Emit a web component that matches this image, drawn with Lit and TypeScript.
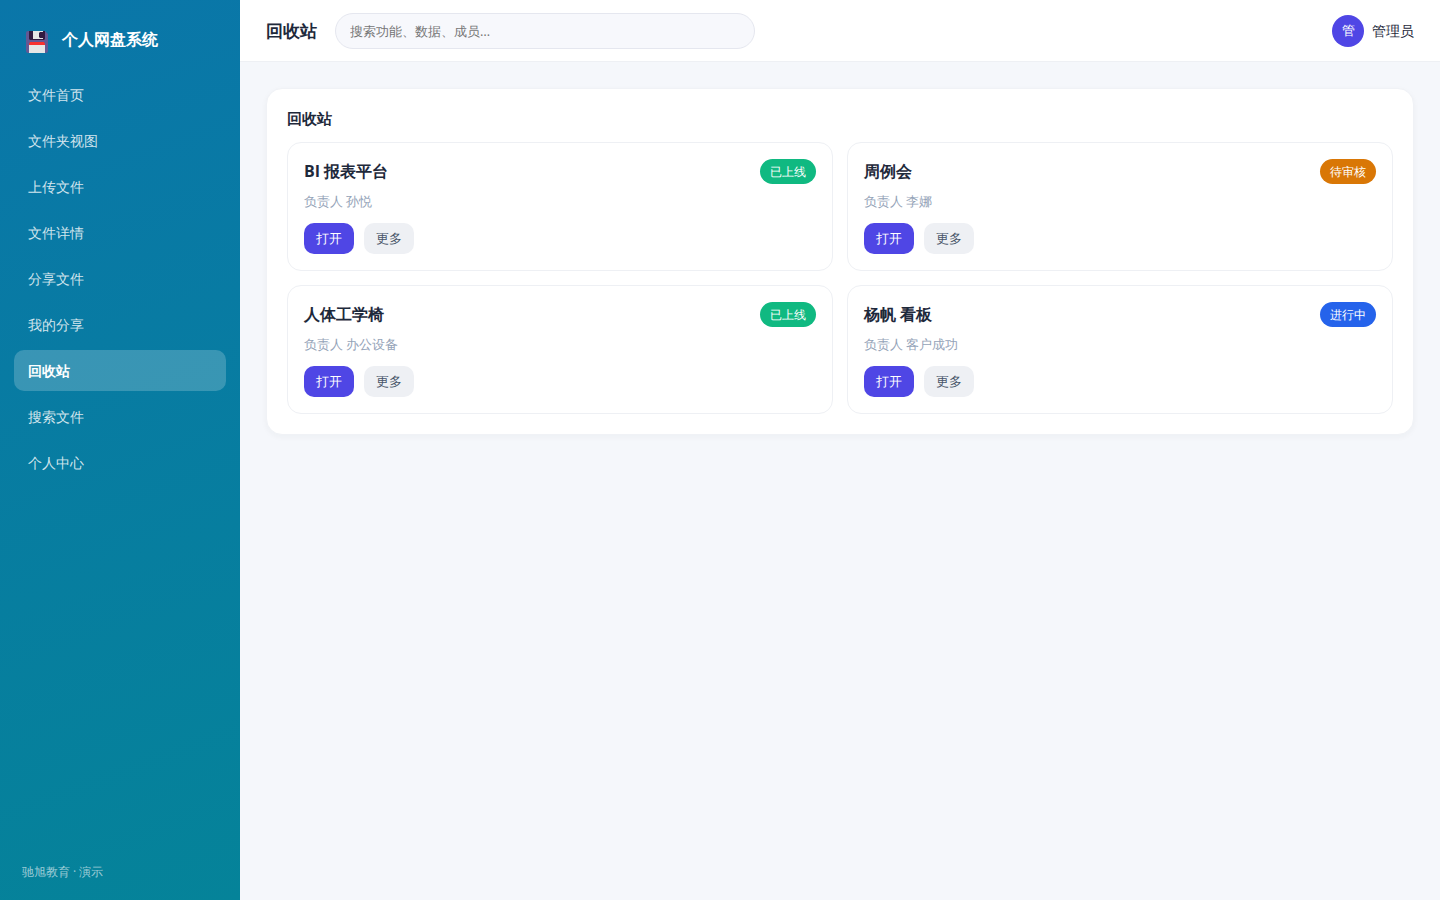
import { LitElement, html, css } from "lit";
import { customElement, state } from "lit/decorators.js";
import { classMap } from "lit/directives/class-map.js";

type Tone = "success" | "warning" | "info";

interface Item {
  title: string;
  owner: string;
  status: string;
  tone: Tone;
}

const NAV = ["文件首页", "文件夹视图", "上传文件", "文件详情", "分享文件", "我的分享", "回收站", "搜索文件", "个人中心"];

const ITEMS: Item[] = [
  { title: "BI 报表平台", owner: "孙悦", status: "已上线", tone: "success" },
  { title: "周例会", owner: "李娜", status: "待审核", tone: "warning" },
  { title: "人体工学椅", owner: "办公设备", status: "已上线", tone: "success" },
  { title: "杨帆 看板", owner: "客户成功", status: "进行中", tone: "info" },
];

@customElement("item-card")
export class ItemCard extends LitElement {
  static properties = { item: { attribute: false } };
  declare item: Item;

  static styles = css`
    :host {
      display: block;
      padding: 16px;
      border: 1px solid #eef0f4;
      border-radius: 14px;
      background: #fff;
    }
    .head {
      display: flex;
      align-items: flex-start;
      justify-content: space-between;
      gap: 12px;
    }
    .title {
      margin: 0;
      font-size: 16px;
      line-height: 24px;
      font-weight: 700;
    }
    .pill {
      padding: 4px 10px;
      border-radius: 999px;
      font-size: 12px;
      line-height: 17px;
      color: #fff;
      white-space: nowrap;
    }
    .success { background: #10b981; }
    .warning { background: #d97706; }
    .info { background: #2563eb; }
    .owner {
      margin: 8px 0 12px;
      font-size: 13px;
      line-height: 19px;
      color: #94a3b8;
    }
    .actions {
      display: flex;
      gap: 10px;
    }
    .btn {
      padding: 6px 12px;
      border: 0;
      border-radius: 10px;
      font: inherit;
      font-size: 13px;
      line-height: 19px;
      background: #eef0f4;
      color: #475569;
      cursor: pointer;
    }
    .primary {
      background: #4f46e5;
      color: #fff;
    }
  `;

  render() {
    const { title, owner, status, tone } = this.item;
    return html`
      <div class="head">
        <h3 class="title">${title}</h3>
        <span class="pill ${tone}">${status}</span>
      </div>
      <p class="owner">负责人 ${owner}</p>
      <div class="actions">
        <button class="btn primary" type="button">打开</button>
        <button class="btn" type="button">更多</button>
      </div>
    `;
  }
}

@customElement("app-root")
export class AppRoot extends LitElement {
  @state() private current = "回收站";

  static styles = css`
    :host {
      display: grid;
      grid-template-columns: 240px minmax(0, 1fr);
      min-height: 100vh;
      background: #f5f7fb;
      color: #1e293b;
      font-family: "Open Sans", system-ui, sans-serif;
      font-size: 14px;
    }
    .sidebar {
      box-sizing: border-box;
      display: flex;
      flex-direction: column;
      padding: 21px 14px 18px;
      background: linear-gradient(160deg, #0a76a9, #058399);
      color: #fff;
    }
    .brand {
      display: flex;
      align-items: center;
      gap: 14px;
      padding: 0 12px 17px;
      font-size: 16px;
      line-height: 36px;
      font-weight: 700;
    }
    .logo {
      width: 22px;
      height: 22px;
      margin-top: 5px;
    }
    .nav {
      display: flex;
      flex-direction: column;
      gap: 5px;
    }
    .link {
      padding: 11px 14px;
      border-radius: 10px;
      line-height: 19px;
      color: rgba(255, 255, 255, 0.82);
      text-decoration: none;
    }
    .active {
      background: rgba(255, 255, 255, 0.2);
      color: #fff;
      font-weight: 700;
    }
    .foot {
      margin-top: auto;
      padding: 0 8px;
      font-size: 12px;
      line-height: 20px;
      color: rgba(255, 255, 255, 0.6);
    }
    .topbar {
      display: flex;
      align-items: center;
      gap: 18px;
      padding: 0 26px;
      height: 61px;
      background: #fff;
      border-bottom: 1px solid #eef0f4;
    }
    .heading {
      margin: 0;
      font-size: 17px;
      font-weight: 700;
    }
    .search {
      box-sizing: border-box;
      flex: 0 1 420px;
      min-width: 0;
      height: 36px;
      padding: 0 14px;
      border: 1px solid #e5e7ef;
      border-radius: 999px;
      background: #f7f8fc;
      font: inherit;
      font-size: 13px;
      color: inherit;
    }
    .search::placeholder {
      color: #757575;
    }
    .user {
      display: flex;
      align-items: center;
      gap: 8px;
      margin-left: auto;
    }
    .avatar {
      display: grid;
      place-items: center;
      width: 32px;
      height: 32px;
      border-radius: 50%;
      background: #4f46e5;
      color: #fff;
      font-size: 13px;
    }
    .content {
      padding: 26px;
    }
    .panel {
      padding: 20px;
      border: 1px solid #f0f2f6;
      border-radius: 16px;
      background: #fff;
      box-shadow: 0 2px 6px rgba(30, 41, 59, 0.04);
    }
    .panel-title {
      margin: 0 0 15px;
      font-size: 15px;
      line-height: 18px;
      font-weight: 700;
    }
    .grid {
      display: grid;
      grid-template-columns: repeat(2, minmax(0, 1fr));
      gap: 14px;
    }
  `;

  private select(e: Event, name: string) {
    e.preventDefault();
    this.current = name;
  }

  render() {
    return html`
      <aside class="sidebar">
        <div class="brand">
          <svg class="logo" viewBox="0 0 22 22" aria-hidden="true">
            <path d="M2 0h17l3 3v17a2 2 0 0 1-2 2H2a2 2 0 0 1-2-2V2a2 2 0 0 1 2-2z" fill="#635994" />
            <path d="M3 0h16v8l-1 1H4L3 8z" fill="#321b41" />
            <path d="M7 0h10v1h-3l-1 1v4l1 1h3v1H7z" fill="#e6e6e6" />
            <path d="M4 11h14l1 2v1H3v-1z" fill="#f8312f" />
            <path d="M3 14h16v8H3z" fill="#e6e6e6" />
          </svg>
          <span>个人网盘系统</span>
        </div>
        <nav class="nav">
          ${NAV.map(
            (name) => html`<a
              class=${classMap({ link: true, active: name === this.current })}
              href="#"
              @click=${(e: Event) => this.select(e, name)}
              >${name}</a
            >`
          )}
        </nav>
        <div class="foot">驰旭教育 · 演示</div>
      </aside>
      <div class="main">
        <header class="topbar">
          <h1 class="heading">${this.current}</h1>
          <input class="search" type="search" aria-label="搜索" placeholder="搜索功能、数据、成员…" />
          <div class="user">
            <span class="avatar">管</span>
            <span>管理员</span>
          </div>
        </header>
        <main class="content">
          <section class="panel">
            <h2 class="panel-title">${this.current}</h2>
            <div class="grid">${ITEMS.map((item) => html`<item-card .item=${item}></item-card>`)}</div>
          </section>
        </main>
      </div>
    `;
  }
}
